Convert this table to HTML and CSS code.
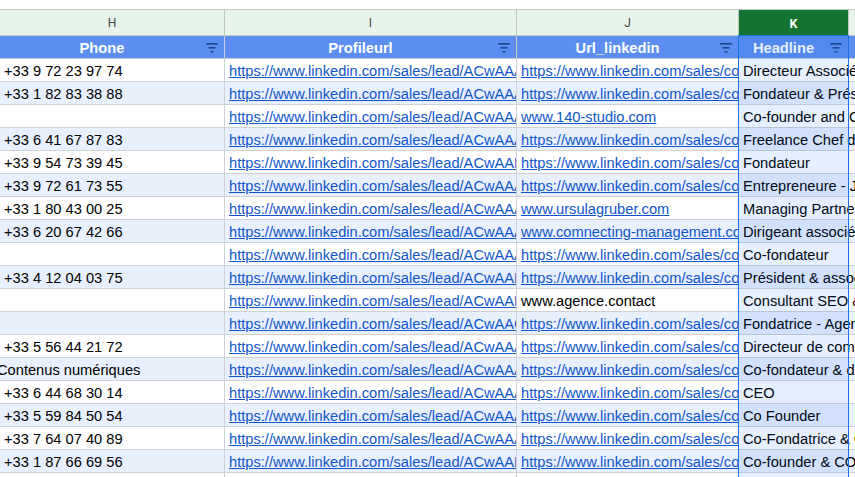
FILE: index.html
```html
<!DOCTYPE html>
<html>
<head>
<meta charset="utf-8">
<link rel="stylesheet" href="styles.css">
</head>
<body>
<div class="sheet">
  <div class="top"></div>
  <div class="row colhdr">
    <div class="cell">H</div>
    <div class="cell">I</div>
    <div class="cell">J</div>
    <div class="cell on">K</div>
    <div class="cell last"></div>
  </div>
  <div class="row hdr">
    <div class="cell"><span class="label">Phone</span><span class="filt"><svg width="12" height="10" viewBox="0 0 12 10"><rect x="0" y="0" width="12" height="1.6"/><rect x="2.5" y="4" width="7" height="1.6"/><rect x="4.5" y="8" width="3" height="1.6"/></svg></span></div>
    <div class="cell"><span class="label">Profileurl</span><span class="filt"><svg width="12" height="10" viewBox="0 0 12 10"><rect x="0" y="0" width="12" height="1.6"/><rect x="2.5" y="4" width="7" height="1.6"/><rect x="4.5" y="8" width="3" height="1.6"/></svg></span></div>
    <div class="cell"><span class="label">Url_linkedin</span><span class="filt"><svg width="12" height="10" viewBox="0 0 12 10"><rect x="0" y="0" width="12" height="1.6"/><rect x="2.5" y="4" width="7" height="1.6"/><rect x="4.5" y="8" width="3" height="1.6"/></svg></span></div>
    <div class="cell"><span class="label">Headline</span><span class="filt"><svg width="12" height="10" viewBox="0 0 12 10"><rect x="0" y="0" width="12" height="1.6"/><rect x="2.5" y="4" width="7" height="1.6"/><rect x="4.5" y="8" width="3" height="1.6"/></svg></span></div>
    <div class="cell last"></div>
  </div>

  <div class="row"><div class="cell">+33 9 72 23 97 74</div><div class="cell"><a>https://www.linkedin.com/sales/lead/ACwAAAbc12</a></div><div class="cell"><a>https://www.linkedin.com/sales/company/1234</a></div><div class="cell k">Directeur Associé</div><div class="cell last"></div></div>
  <div class="row alt"><div class="cell">+33 1 82 83 38 88</div><div class="cell"><a>https://www.linkedin.com/sales/lead/ACwAAAde34</a></div><div class="cell"><a>https://www.linkedin.com/sales/company/2345</a></div><div class="cell k">Fondateur &amp; Président</div><div class="cell last"></div></div>
  <div class="row"><div class="cell"></div><div class="cell"><a>https://www.linkedin.com/sales/lead/ACwAAAfg56</a></div><div class="cell"><a>www.140-studio.com</a></div><div class="cell k">Co-founder and CEO</div><div class="cell last"></div></div>
  <div class="row alt"><div class="cell">+33 6 41 67 87 83</div><div class="cell"><a>https://www.linkedin.com/sales/lead/ACwAAAhi78</a></div><div class="cell"><a>https://www.linkedin.com/sales/company/3456</a></div><div class="cell k">Freelance Chef de projet</div><div class="cell last"></div></div>
  <div class="row"><div class="cell">+33 9 54 73 39 45</div><div class="cell"><a>https://www.linkedin.com/sales/lead/ACwAABjk90</a></div><div class="cell"><a>https://www.linkedin.com/sales/company/4567</a></div><div class="cell k">Fondateur</div><div class="cell last"></div></div>
  <div class="row alt"><div class="cell">+33 9 72 61 73 55</div><div class="cell"><a>https://www.linkedin.com/sales/lead/ACwAAAlm12</a></div><div class="cell"><a>https://www.linkedin.com/sales/company/5678</a></div><div class="cell k">Entrepreneure - Journaliste</div><div class="cell last"></div></div>
  <div class="row"><div class="cell">+33 1 80 43 00 25</div><div class="cell"><a>https://www.linkedin.com/sales/lead/ACwAAAno34</a></div><div class="cell"><a>www.ursulagruber.com</a></div><div class="cell k">Managing Partner</div><div class="cell last"></div></div>
  <div class="row alt"><div class="cell">+33 6 20 67 42 66</div><div class="cell"><a>https://www.linkedin.com/sales/lead/ACwAAApq56</a></div><div class="cell"><a>www.comnecting-management.com</a></div><div class="cell k">Dirigeant associé</div><div class="cell last"></div></div>
  <div class="row"><div class="cell"></div><div class="cell"><a>https://www.linkedin.com/sales/lead/ACwAAArs78</a></div><div class="cell"><a>https://www.linkedin.com/sales/company/6789</a></div><div class="cell k">Co-fondateur</div><div class="cell last"></div></div>
  <div class="row alt"><div class="cell">+33 4 12 04 03 75</div><div class="cell"><a>https://www.linkedin.com/sales/lead/ACwAABtu90</a></div><div class="cell"><a>https://www.linkedin.com/sales/company/7890</a></div><div class="cell k">Président &amp; associé</div><div class="cell last"></div></div>
  <div class="row"><div class="cell"></div><div class="cell"><a>https://www.linkedin.com/sales/lead/ACwAABvw12</a></div><div class="cell">www.agence.contact</div><div class="cell k">Consultant SEO &amp; SEA</div><div class="cell last"></div></div>
  <div class="row alt"><div class="cell"></div><div class="cell"><a>https://www.linkedin.com/sales/lead/ACwAACxy34</a></div><div class="cell"><a>https://www.linkedin.com/sales/company/8901</a></div><div class="cell k">Fondatrice - Agence</div><div class="cell last"></div></div>
  <div class="row"><div class="cell">+33 5 56 44 21 72</div><div class="cell"><a>https://www.linkedin.com/sales/lead/ACwAAAza56</a></div><div class="cell"><a>https://www.linkedin.com/sales/company/9012</a></div><div class="cell k">Directeur de communication</div><div class="cell last"></div></div>
  <div class="row alt"><div class="cell"><span class="spill">Contenus numériques</span></div><div class="cell"><a>https://www.linkedin.com/sales/lead/ACwAAAbb78</a></div><div class="cell"><a>https://www.linkedin.com/sales/company/1122</a></div><div class="cell k">Co-fondateur &amp; directeur</div><div class="cell last"></div></div>
  <div class="row"><div class="cell">+33 6 44 68 30 14</div><div class="cell"><a>https://www.linkedin.com/sales/lead/ACwAAAcc90</a></div><div class="cell"><a>https://www.linkedin.com/sales/company/2233</a></div><div class="cell k">CEO</div><div class="cell last"></div></div>
  <div class="row alt"><div class="cell">+33 5 59 84 50 54</div><div class="cell"><a>https://www.linkedin.com/sales/lead/ACwAAAdd12</a></div><div class="cell"><a>https://www.linkedin.com/sales/company/3344</a></div><div class="cell k">Co Founder</div><div class="cell last"></div></div>
  <div class="row"><div class="cell">+33 7 64 07 40 89</div><div class="cell"><a>https://www.linkedin.com/sales/lead/ACwAAAee34</a></div><div class="cell"><a>https://www.linkedin.com/sales/company/4455</a></div><div class="cell k">Co-Fondatrice &amp; CEO</div><div class="cell last"></div></div>
  <div class="row alt"><div class="cell">+33 1 87 66 69 56</div><div class="cell"><a>https://www.linkedin.com/sales/lead/ACwAABff56</a></div><div class="cell"><a>https://www.linkedin.com/sales/company/5566</a></div><div class="cell k">Co-founder &amp; COO</div><div class="cell last"></div></div>
  <div class="row"><div class="cell"></div><div class="cell"></div><div class="cell"></div><div class="cell k"></div><div class="cell last"></div></div>

  <div class="sel"></div>
</div>
</body>
</html>
```
FILE: styles.css
```css
html, body {
  margin: 0;
  padding: 0;
  background: #ffffff;
  overflow: hidden;
}

.sheet {
  position: relative;
  width: 855px;
  height: 477px;
  overflow: hidden;
  font-family: "Liberation Sans", Arial, sans-serif;
  font-size: 14.67px;
  color: #000;
}

.top {
  height: 9px;
  border-bottom: 1px solid #c4c7c5;
}

.row {
  display: grid;
  grid-template-columns: 225px 292px 222px 110px 1fr;
  height: 23px;
  box-sizing: border-box;
  border-bottom: 1px solid #cdd1d6;
  line-height: 22px;
  background: #ffffff;
}

.row.alt {
  background: #e8f0fe;
}

.cell {
  box-sizing: border-box;
  border-right: 1px solid #cdd1d6;
  padding: 1px 4px 0;
  overflow: hidden;
  white-space: nowrap;
  min-width: 0;
}

.cell.k {
  overflow: visible;
}

.cell.last {
  border-right: none;
}

.cell a {
  color: #1155cc;
  text-decoration: underline;
}

.spill {
  display: inline-block;
  margin-left: -7px;
}

/* column letters */
.colhdr {
  height: 26px;
  background: #e6f4ea;
  border-bottom: 1px solid #c4c7c5;
  line-height: 25px;
}

.colhdr .cell {
  border-right-color: #c4c7c5;
  text-align: center;
  font-family: Roboto, "Liberation Sans", Arial, sans-serif;
  font-size: 12px;
  color: #444746;
}

.colhdr .cell.on {
  background: #137333;
  color: #ffffff;
  font-weight: bold;
  font-size: 12.5px;
}

/* blue header row */
.hdr {
  background: #5b8ef0;
  border-bottom-color: #c7cdd8;
}

.hdr .cell {
  display: flex;
  align-items: center;
  padding: 2px 0 0;
  color: #ffffff;
  font-weight: bold;
  border-right-color: #c7cdd8;
}

.hdr .cell.last {
  border-right: none;
}

.hdr .label {
  flex: 1;
  text-align: center;
}

.hdr .filt {
  width: 20px;
  height: 20px;
  display: flex;
  align-items: center;
  padding-left: 2px;
  box-sizing: border-box;
}

.hdr .filt svg {
  fill: #23468c;
  display: block;
}

/* selected column overlay */
.sel {
  position: absolute;
  left: 738px;
  top: 35px;
  width: 111px;
  bottom: -4px;
  box-sizing: border-box;
  border: 1px solid #1a73e8;
  background: rgba(14, 101, 235, 0.1);
  pointer-events: none;
}
```
